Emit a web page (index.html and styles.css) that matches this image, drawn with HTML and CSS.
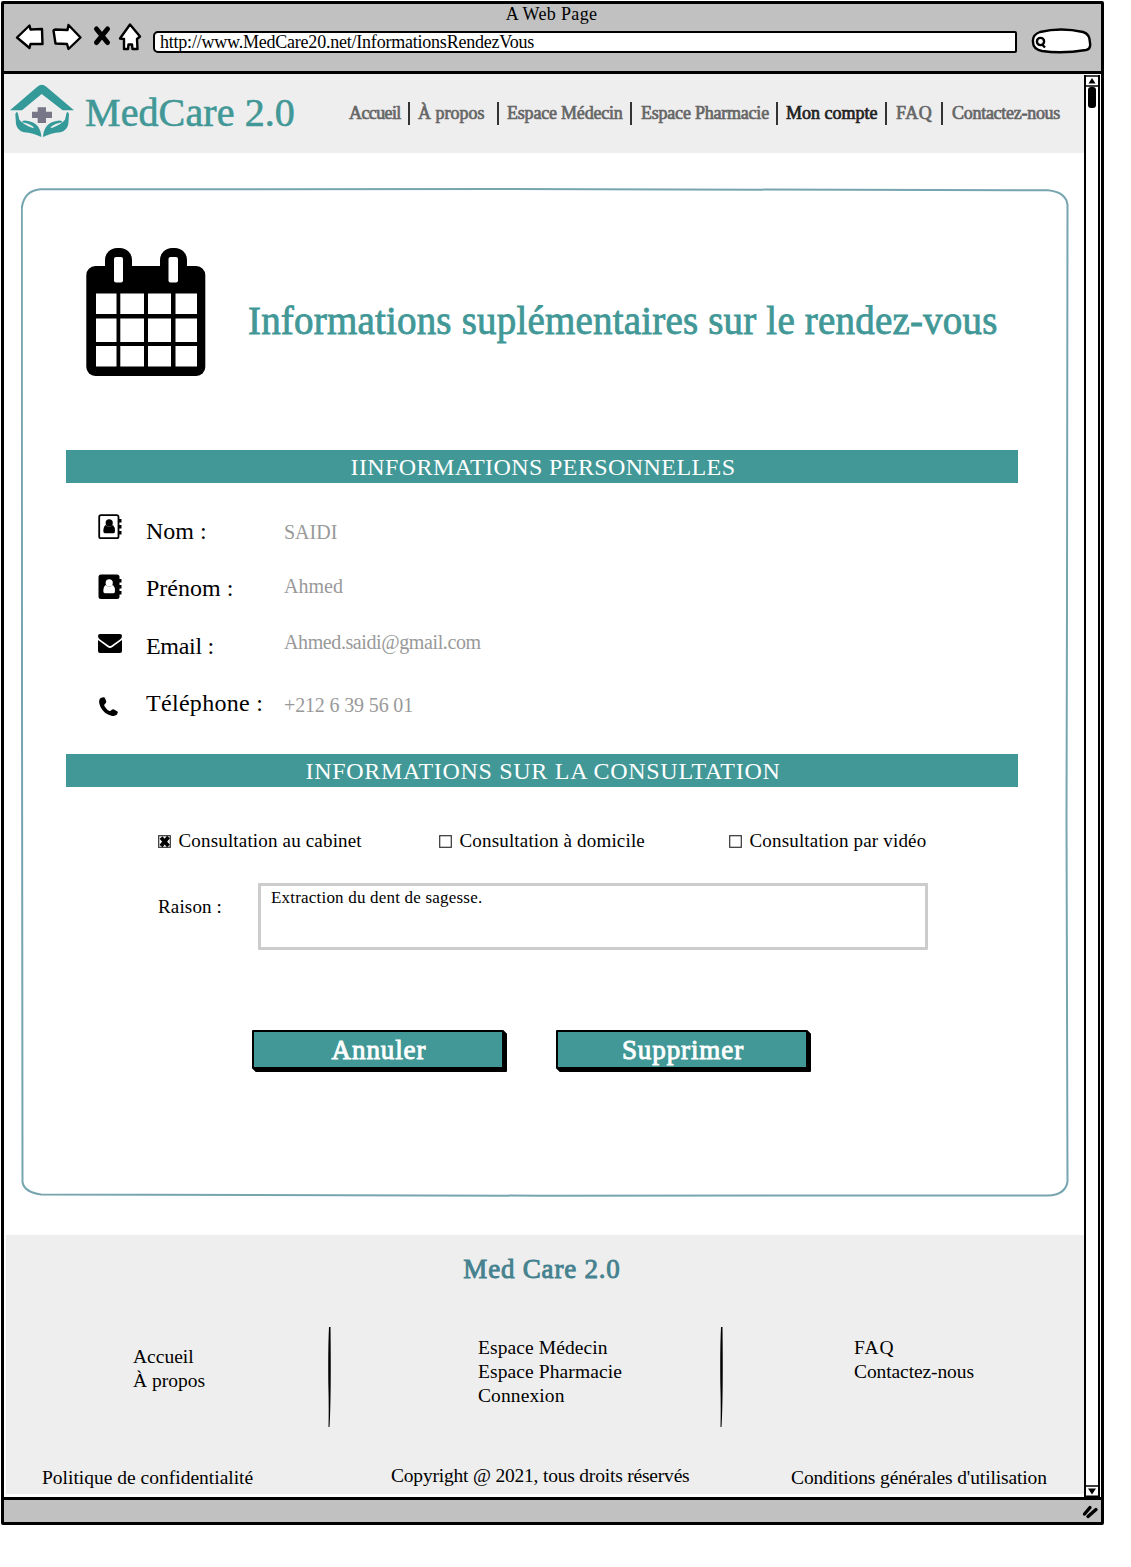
FILE: index.html
```html
<!DOCTYPE html>
<html lang="fr">
<head>
<meta charset="utf-8">
<title>MedCare 2.0 – Informations sur le rendez-vous</title>
<link rel="stylesheet" href="styles.css">
</head>
<body>
<div class="window">
  <div class="toolbar">
    <div class="window-title">A Web Page</div>
    <div class="controls">
      <svg class="nav-icons" width="130" height="32" viewBox="14 20 130 32" fill="#fff" stroke="#000" stroke-width="2.4" stroke-linejoin="round">
        <path d="M17 37.500L29.500 25.500L30.500 29.500L42 29L42.500 44L30.500 44L29.500 48Z"/>
        <path d="M53.500 30.500Q54 29.500 55.500 29.500L67.500 30L68.500 25L80.500 37.500L68.500 49L67 44L55.500 43.500Z"/>
        <path d="M96.500 29L107.500 42.500M107.500 29L96.500 42.500" stroke-width="5" stroke-linecap="round"/>
        <path d="M130 24.500L140 36.500L137 39L137.500 49L132.500 49L132 44.500L128.500 44.500L128 49L124 49L124 39L120 38.500Z"/>
      </svg>
      <div class="url">http://www.MedCare20.net/InformationsRendezVous</div>
      <svg class="search" width="62" height="28" viewBox="1030 27 62 28" fill="#fff" stroke="#000" stroke-width="2.400">
        <path d="M1040 32Q1061 27 1083 32Q1090 34 1090 43Q1091 49 1086 50Q1062 54 1042 51Q1033 49 1033 42Q1032 35 1040 32Z"/>
        <circle cx="1040.500" cy="41.500" r="3.600"/>
        <path d="M1042 44.500L1045 47.500"/>
      </svg>
    </div>
  </div>

  <div class="viewport">
    <div class="page">
      <header class="site-header">
        <svg class="logo" width="65" height="54" viewBox="30 42 195 162" fill="#339999">
          <path d="M30 121L112 50Q125 39 139 50L222 121H188L125 72L66 121Z"/>
          <path fill="#777788" d="M113 112h25v13h18v19h-18v15h-25v-15h-17v-19h17z"/>
          <path id="hand" d="M46 132Q52 120 54 132L58 149Q70 164 98 174L102 172Q88 160 66 157Q66 149 80 152Q102 155 112 167Q123 180 124 201Q100 189 72 187Q52 182 48 162Z"/>
          <use href="#hand" transform="translate(253 0) scale(-1 1)"/>
        </svg>
        <div class="brand">MedCare 2.0</div>
        <ul class="menu">
          <li class="m-home">Accueil</li>
          <li class="m-about">À propos</li>
          <li class="m-doctor">Espace Médecin</li>
          <li class="m-pharmacy">Espace Pharmacie</li>
          <li class="m-account active">Mon compte</li>
          <li class="m-faq">FAQ</li>
          <li class="m-contact">Contactez-nous</li>
        </ul>
      </header>

      <main class="card">
        <svg class="outline" width="1048" height="1009" viewBox="21 188 1048 1009" fill="none" stroke="#76a5af" stroke-width="2">
          <path d="M40 189.300L500 189L1048 190.300Q1066 192 1067.500 205L1067 600L1066.500 820L1067.500 1182Q1065 1195 1048 1195.500L540 1195.700L41 1194.500Q24 1192 22.500 1182L22 700L21.800 208Q24 191 40 189.300Z"/>
        </svg>

        <div class="hero">
          <svg width="120" height="128" viewBox="86 248 120 128">
            <rect x="86.300" y="266" width="119" height="110" rx="9"/>
            <rect x="105" y="248" width="27" height="44" rx="12"/>
            <rect x="160" y="248" width="27" height="44" rx="12"/>
            <g fill="#fff">
              <rect x="114" y="257" width="9" height="25.500" rx="2"/>
              <rect x="168.500" y="257" width="9.500" height="25.500" rx="2"/>
              <path d="M96 293.500h20.500v20.500h-20.500zM120.300 293.500h23.700v20.500h-23.700zM148 293.500h23v20.500h-23zM175.500 293.500h21.500v20.500h-21.500zM96 318.500h20.500v23.500h-20.500zM120.300 318.500h23.700v23.500h-23.700zM148 318.500h23v23.500h-23zM175.500 318.500h21.500v23.500h-21.500zM96 346h20.500v20.500h-20.500zM120.300 346h23.700v20.500h-23.700zM148 346h23v20.500h-23zM175.500 346h21.500v20.500h-21.500z"/>
            </g>
          </svg>
          <h1>Informations suplémentaires sur le rendez-vous</h1>
        </div>

        <h2 class="banner">IINFORMATIONS PERSONNELLES</h2>
        <div class="details">
          <div class="row r-name">
            <svg width="24" height="26" viewBox="0 0 24 26">
              <rect x="1.200" y="1.200" width="19.300" height="23" rx="1.800" fill="none" stroke="#000" stroke-width="1.800"/>
              <path d="M21 5h2.500v3.500h-2.500zM21 11h2.500v3.500h-2.500zM21 17h2.500v3.500h-2.500z"/>
              <circle cx="11.200" cy="8.900" r="3.600"/>
              <path d="M7.500 11Q11 14 15 11Q17 13 17 17Q17 19.300 15.500 19.300H7Q5.300 19.300 5.300 17Q5.500 12.500 7.500 11Z"/>
            </svg>
            <span class="label">Nom :</span><span class="value">SAIDI</span>
          </div>
          <div class="row r-first">
            <svg width="24" height="26" viewBox="0 0 24 26">
              <rect x=".500" y=".500" width="21" height="24.500" rx="2.500"/>
              <path d="M21 5h2.500v3.500h-2.500zM21 11h2.500v3.500h-2.500zM21 17h2.500v3.500h-2.500z"/>
              <circle cx="11.200" cy="8.900" r="3.600" fill="#fff"/>
              <path fill="#fff" d="M7.500 11Q11 14 15 11Q17 13 17 17Q17 19.300 15.500 19.300H7Q5.300 19.300 5.300 17Q5.500 12.500 7.500 11Z"/>
            </svg>
            <span class="label">Prénom :</span><span class="value">Ahmed</span>
          </div>
          <div class="row r-mail">
            <svg width="24" height="19" viewBox="0 0 24 19">
              <path d="M2 0H22Q24 0 24 2Q24 4 22 5.500L13.500 11.500Q12 12.500 10.500 11.500L2 5.500Q0 4 0 2Q0 0 2 0ZM0 6L9.500 13Q12 14.800 14.500 13L24 6V17Q24 19 22 19H2Q0 19 0 17Z"/>
            </svg>
            <span class="label">Email :</span><span class="value">Ahmed.saidi@gmail.com</span>
          </div>
          <div class="row r-phone">
            <svg width="24" height="20" viewBox="-1 0 24 20">
              <path d="M1 1.500Q3 .300 5 .300Q6 .500 7.300 4.500Q7.500 6 5.500 7.300Q4.700 8.200 6 10Q8 13 10.500 14Q11.500 14.300 12.500 13Q13.500 12 14.500 12.200L18.500 14.500Q19.300 15.200 18 17.500Q16 19.500 12.500 18.800Q5 17 1.500 10Q-1 4.500 1 1.500Z"/>
            </svg>
            <span class="label">Téléphone :</span><span class="value">+212 6 39 56 01</span>
          </div>
        </div>

        <h2 class="banner wide">INFORMATIONS SUR LA CONSULTATION</h2>
        <div class="choices">
          <div class="choice">
            <svg class="box" width="13" height="13" viewBox="0 0 13 13"><rect x=".700" y=".700" width="11.600" height="11.600" fill="#fff" stroke="#333" stroke-width="1.200"/><path d="M3 2.500L10.500 11M10.500 2L3 11" stroke="#000" stroke-width="3.800"/></svg>
            <span>Consultation au cabinet</span>
          </div>
          <div class="choice">
            <svg class="box" width="13" height="13" viewBox="0 0 13 13"><rect x=".700" y=".700" width="11.600" height="11.600" fill="#fff" stroke="#333" stroke-width="1.200"/></svg>
            <span>Consultation à domicile</span>
          </div>
          <div class="choice">
            <svg class="box" width="13" height="13" viewBox="0 0 13 13"><rect x=".700" y=".700" width="11.600" height="11.600" fill="#fff" stroke="#333" stroke-width="1.200"/></svg>
            <span>Consultation par vidéo</span>
          </div>
        </div>
        <div class="reason">
          <span class="reason-label">Raison :</span>
          <div class="reason-text">Extraction du dent de sagesse.</div>
        </div>
        <div class="actions">
          <button type="button">Annuler</button>
          <button type="button">Supprimer</button>
        </div>
      </main>

      <footer class="site-footer">
        <div class="footer-title">Med Care 2.0</div>
        <div class="footer-columns">
          <ul class="f-left"><li>Accueil</li><li>À propos</li></ul>
          <svg width="3" height="100" viewBox="0 0 3 100"><path d="M1 0H2.500Q3.300 70 1.500 100H.500Q1 80 .300 55Q0 20 1 0Z"/></svg>
          <ul class="f-middle"><li>Espace Médecin</li><li>Espace Pharmacie</li><li>Connexion</li></ul>
          <svg width="3" height="100" viewBox="0 0 3 100"><path d="M1 0H2.500Q3.300 70 1.500 100H.500Q1 80 .300 55Q0 20 1 0Z"/></svg>
          <ul class="f-right"><li class="faq">FAQ</li><li>Contactez-nous</li></ul>
        </div>
        <div class="legal">
          <span class="privacy">Politique de confidentialité</span>
          <span class="copyright">Copyright @ 2021, tous droits réservés</span>
          <span class="terms">Conditions générales d'utilisation</span>
        </div>
      </footer>
    </div>

    <div class="scrollbar">
      <svg width="12" height="12" viewBox="0 0 12 12"><path d="M0 1H12M0 11H12" stroke="#000" stroke-width="1.600"/><path d="M2.500 8.500L6 3L9.500 8.500Z"/></svg>
      <div class="thumb"></div>
      <svg class="down" width="12" height="12" viewBox="0 0 12 12"><path d="M0 1H12M0 11.300H12" stroke="#000" stroke-width="1.500"/><path d="M2 3.500H10L6 9.500Z"/></svg>
    </div>
  </div>

  <div class="statusbar">
    <svg width="17" height="14" viewBox="0 0 17 14" fill="none" stroke="#000" stroke-linecap="round" stroke-width="3.400"><path d="M2.500 9L8 2.500M6 11.500L14 4.500"/></svg>
  </div>
</div>
</body>
</html>
```
FILE: styles.css
```css
* { box-sizing: border-box; }

body {
  margin: 0;
  background: #fff;
  color: #000;
  font-family: "Liberation Serif", "Times New Roman", serif;
}

h1, h2, ul { margin: 0; padding: 0; font-weight: normal; list-style: none; }
svg { display: block; flex: none; }
span, li, h1, h2, button { white-space: nowrap; }

.window {
  display: flex;
  flex-direction: column;
  width: 1103px;
  height: 1524px;
  margin: 1px 0 0 1px;
  border: 3px solid #000;
  border-radius: 2px;
}

/* Browser toolbar */
.toolbar {
  height: 70px;
  background: #c1c1c1;
  border-bottom: 3px solid #000;
}
.window-title {
  padding-right: 2px;
  font-size: 18px;
  line-height: 21px;
  letter-spacing: .35px;
  text-align: center;
}
.controls { display: flex; align-items: flex-start; padding-left: 10px; }
.nav-icons { margin-top: -5px; }
.url {
  width: 864px;
  height: 22px;
  margin: 6px 14px 0 9px;
  padding-left: 5px;
  background: #fff;
  border: 2px solid #000;
  border-radius: 5px 2px 2px 5px;
  font-size: 18px;
  line-height: 18px;
  letter-spacing: -.22px;
}
.search { margin: 2px 0 0 -1px; }

.viewport { display: flex; height: 1423px; }
.page { width: 1080px; }

/* Site header */
.site-header {
  display: flex;
  height: 79px;
  padding-left: 6px;
  background: #eee;
}
.logo { margin-top: 10px; }
.brand {
  width: 264px;
  margin: 16px 0 0 10px;
  color: #419897;
  font-size: 40px;
  line-height: 46px;
  letter-spacing: .1px;
  -webkit-text-stroke: .6px;
}
.menu {
  display: flex;
  margin-top: 28px;
  color: #666;
  font-size: 18px;
  line-height: 23px;
  -webkit-text-stroke: .7px;
}
.menu li { height: 23px; border-right: 2px solid #333; }
.menu .m-home { width: 61px; letter-spacing: -.6px; }
.menu .m-about { width: 89px; padding-left: 8px; }
.menu .m-doctor { width: 133px; padding-left: 8px; letter-spacing: -.2px; }
.menu .m-pharmacy { width: 146px; padding-left: 9px; letter-spacing: -.22px; }
.menu .m-account { width: 109px; padding-left: 8px; }
.menu .m-faq { width: 56px; padding-left: 9px; letter-spacing: .6px; }
.menu .m-contact { padding-left: 9px; border-right: 0; letter-spacing: -.28px; }
.menu .active { color: #222; }

/* Appointment card */
.card {
  position: relative;
  width: 1048px;
  height: 1009px;
  margin: 35px 0 0 17px;
  padding: 0 51px 0 45px;
}
.outline { position: absolute; inset: 0; }
.hero {
  display: flex;
  height: 262px;
  padding: 60px 0 0 20px;
}
.hero h1 {
  margin: 48px 0 0 42px;
  color: #419897;
  font-size: 39px;
  line-height: 49px;
  letter-spacing: .19px;
  -webkit-text-stroke: .8px;
}
.banner {
  height: 33px;
  padding-left: 2px;
  background: #419897;
  color: #fff;
  font-size: 24px;
  line-height: 35px;
  letter-spacing: .42px;
  text-align: center;
}
.banner.wide { letter-spacing: .7px; }

.details { height: 271px; padding: 31px 0 0 32px; }
.row { display: flex; align-items: flex-start; height: 56px; line-height: 30px; }
.label { width: 162px; padding-left: 24px; font-size: 24px; }
.value { margin-top: 1px; color: #999; font-size: 20px; }
.r-name .label { margin-top: 2px; }
.r-name .value { margin-top: 3px; }
.r-first svg { margin-top: 4px; }
.r-first .label { margin-top: 3px; }
.r-mail { height: 62px; }
.r-mail svg { margin-top: 8px; }
.r-mail .label { margin-top: 5px; letter-spacing: -.3px; }
.r-mail .value { letter-spacing: -.4px; }
.r-phone svg { margin-top: 9px; }
.r-phone .label { letter-spacing: .3px; }
.r-phone .value { margin-top: 2px; letter-spacing: -.15px; }

.choices {
  display: grid;
  grid-template-columns: 281px 290px auto;
  height: 24px;
  margin-top: 42px;
  padding-left: 92px;
  font-size: 19px;
  line-height: 24px;
  letter-spacing: .17px;
}
.choice { display: flex; gap: 7.500px; }
.box { margin-top: 6px; }

.reason { display: flex; margin-top: 30px; padding-left: 92px; }
.reason-label {
  width: 100px;
  padding-top: 12px;
  font-size: 19px;
  line-height: 24px;
  letter-spacing: .15px;
}
.reason-text {
  width: 670px;
  height: 67px;
  padding: 2px 10px;
  border: 3px solid #ccc;
  border-radius: 1px;
  font-size: 17px;
  line-height: 20px;
  letter-spacing: .2px;
}

.actions { display: flex; gap: 52px; margin-top: 80px; padding-left: 186px; }
.actions button {
  width: 252px;
  height: 39px;
  padding: 0;
  background: #419897;
  border: 2px solid #000;
  border-radius: 1px;
  box-shadow: 1px 1px 0 #000, 2px 2px 0 #000, 3px 3px 0 #000;
  color: #fff;
  font: 27px/34px "Liberation Serif", "Times New Roman", serif;
  letter-spacing: .9px;
  text-indent: 2px;
  -webkit-text-stroke: .9px;
}

/* Site footer */
.site-footer {
  width: 1079px;
  height: 259px;
  margin: 38px 0 0 2px;
  padding-top: 18px;
  background: #eee;
  font-size: 19.500px;
  line-height: 24px;
}
.footer-title {
  padding-right: 7px;
  color: #45818e;
  font-size: 27px;
  line-height: 32px;
  letter-spacing: .8px;
  text-align: center;
  -webkit-text-stroke: .9px;
}
.footer-columns {
  display: grid;
  grid-template-columns: 322px 3px 389px 3px auto;
  height: 100px;
  margin-top: 42px;
}
.f-left { padding: 18px 0 0 127px; }
.f-middle { padding: 9px 0 0 147px; letter-spacing: .1px; }
.f-right { padding: 9px 0 0 131px; letter-spacing: -.1px; }
.faq { letter-spacing: 1px; }
.legal {
  display: grid;
  grid-template-columns: 349px 400px auto;
  margin-top: 37px;
  padding-left: 36px;
}
.privacy, .terms { padding-top: 2px; }
.copyright { letter-spacing: -.2px; }
.terms { letter-spacing: -.13px; }

/* Scrollbar and status bar */
.scrollbar {
  display: flex;
  flex-direction: column;
  width: 16px;
  margin-top: 1px;
  background: #fff;
  border: solid #000;
  border-width: 0 2px;
}
.thumb {
  width: 8px;
  height: 21px;
  margin: 0 0 0 2px;
  background: #000;
  border-radius: 3px;
}
.down { margin-top: auto; }
.statusbar {
  display: flex;
  justify-content: flex-end;
  height: 25px;
  padding: 5px 2px 0 0;
  background: #c1c1c1;
  border-top: 3px solid #000;
}
```
